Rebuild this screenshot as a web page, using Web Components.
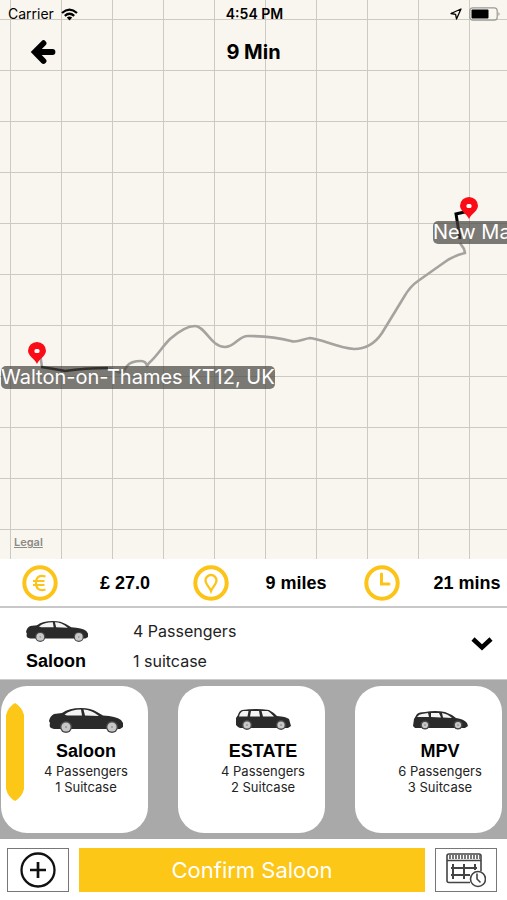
<!DOCTYPE html>
<html lang="en">
<head>
  <meta charset="utf-8">
  <meta name="viewport" content="width=device-width, initial-scale=1">
  <title>Choose your ride</title>
  <style>
    body {
      margin: 0;
      min-height: 100vh;
      display: flex;
      flex-direction: column;
      background: white;
      color: black;
      font-family: Inter, Roboto, sans-serif;
      --brand: #fcc716;
      --heading: "Liberation Sans", Arial, sans-serif;
    }
    ride-map {
      flex: 1;
    }
  </style>
</head>
<body>
  <ride-map>
    <status-bar slot="top"></status-bar>
    <title-bar slot="top">9 Min</title-bar>
    <map-pin x="37" y="342">Walton-on-Thames KT12, UK</map-pin>
    <map-pin x="469" y="197" clipped>New Ma</map-pin>
  </ride-map>
  <trip-stats>
    <trip-stat icon="euro">£ 27.0</trip-stat>
    <trip-stat icon="place">9 miles</trip-stat>
    <trip-stat icon="clock">21 mins</trip-stat>
  </trip-stats>
  <ride-summary>
    <span slot="name">Saloon</span>
    <span slot="seats">4 Passengers</span>
    <span slot="bags">1 suitcase</span>
  </ride-summary>
  <ride-list>
    <ride-card car="saloon" selected>
      <span slot="name">Saloon</span>
      <span slot="seats">4 Passengers</span>
      <span slot="bags">1 Suitcase</span>
    </ride-card>
    <ride-card car="estate">
      <span slot="name">ESTATE</span>
      <span slot="seats">4 Passengers</span>
      <span slot="bags">2 Suitcase</span>
    </ride-card>
    <ride-card car="mpv">
      <span slot="name">MPV</span>
      <span slot="seats">6 Passengers</span>
      <span slot="bags">3 Suitcase</span>
    </ride-card>
  </ride-list>
  <confirm-bar>Confirm Saloon</confirm-bar>

  <script>
    class StatusBar extends HTMLElement {
      constructor() {
        super();
        this.shadowDOM = this.attachShadow({ mode: "open" });
      }

      connectedCallback() {
        this.shadowDOM.innerHTML = `
          <style>
            :host {
              display: grid;
              grid-template-columns: 1fr auto 1fr;
              align-items: center;
              height: 28px;
              padding: 0 6px 0 8px;
              font-size: 14px;
              line-height: 16px;
            }
            .left, .right {
              display: flex;
              align-items: center;
              gap: 7px;
            }
            .right {
              justify-content: flex-end;
            }
            .time {
              font-weight: 600;
            }
            svg {
              display: block;
            }
          </style>
          <div class="left">
            <span>Carrier</span>
            <svg width="17" height="13" viewBox="0 0 17 13" fill="none" stroke="black" stroke-width="2.200">
              <path d="M1 5 Q8.500 -1.800 16 5"/>
              <path d="M3.800 7.900 Q8.500 3.600 13.200 7.900"/>
              <path d="M5.800 9.500 Q8.500 7.300 11.200 9.500 L8.500 12.400Z" fill="black" stroke="none"/>
            </svg>
          </div>
          <span class="time">4:54 PM</span>
          <div class="right">
            <svg width="12" height="12" viewBox="0 0 12 12">
              <path d="M11 1 L1 5.500 L5.600 6.400 L6.500 11Z" fill="none" stroke="black" stroke-width="1.300" stroke-linejoin="round"/>
            </svg>
            <svg width="32" height="14" viewBox="0 0 32 14">
              <rect x=".8" y=".8" width="27.400" height="12.400" rx="3" fill="none" stroke="#999" stroke-width="1.200"/>
              <rect x="2.500" y="2.500" width="17" height="9" rx="1" fill="black"/>
              <path d="M29.500 5 Q31.500 7 29.500 9Z" fill="#888"/>
            </svg>
          </div>
        `;
      }
    }

    customElements.define("status-bar", StatusBar);

    class TitleBar extends HTMLElement {
      constructor() {
        super();
        this.shadowDOM = this.attachShadow({ mode: "open" });
      }

      connectedCallback() {
        this.shadowDOM.innerHTML = `
          <style>
            :host {
              display: grid;
              grid-template-columns: 1fr auto 1fr;
              align-items: center;
              height: 48px;
              padding: 0 30px;
            }
            button {
              justify-self: start;
              padding: 0;
              border: 0;
              background: none;
              cursor: pointer;
            }
            svg {
              display: block;
            }
            h1 {
              margin: 0;
              font-size: 20px;
              line-height: 24px;
              font-weight: 700;
            }
          </style>
          <button type="button" aria-label="Back">
            <svg width="26" height="26" viewBox="0 0 26 26" fill="none" stroke="black" stroke-width="5.800" stroke-linecap="round" stroke-linejoin="miter">
              <path d="M22.500 13 H7 M13.500 4.200 L4.800 13 L13.500 22"/>
            </svg>
          </button>
          <h1><slot></slot></h1>
        `;
      }
    }

    customElements.define("title-bar", TitleBar);

    class RideMap extends HTMLElement {
      constructor() {
        super();
        this.shadowDOM = this.attachShadow({ mode: "open" });
      }

      connectedCallback() {
        this.shadowDOM.innerHTML = `
          <style>
            :host {
              display: flex;
              flex-direction: column;
              position: relative;
              overflow: hidden;
              min-height: 420px;
              background-color: #f9f6ef;
              background-image:
                linear-gradient(to right, #cdcac4 1px, transparent 1px),
                linear-gradient(to bottom, #cdcac4 1px, transparent 1px);
              background-size: 51px 51px;
              background-position: 10px 19px;
            }
            .route {
              position: absolute;
              left: 0;
              top: 0;
            }
            slot[name="top"]::slotted(*) {
              position: relative;
            }
            a {
              position: relative;
              align-self: flex-start;
              margin: auto 14px 10px;
              color: #8c8a86;
              font-size: 11px;
              line-height: 14px;
              font-weight: 600;
            }
          </style>
          <svg class="route" width="507" height="559" viewBox="0 0 507 559" fill="none" stroke-width="2.600" stroke-linejoin="round">
            <path stroke="#a5a39f" d="M40 354 L42 367 M109 368 L118 372 Q123 374 127 366 Q131 361 141 361 Q146 361 147 366 L149 363 C157 356 162 347 170 339 C178 332 187 326 195 326 C205 326 211 347 225 347 C235 347 238 336 248 336 C266 336 280 338 291 341 C297 343 303 339 310 338 C321 339 339 348 354 349 C368 349 376 342 382 333 L404 297 C408 290 412 285 418 281 L442 264 Q452 256 465 253 L464 249 L460 243"/>
            <path stroke="black" d="M41 367 Q55 369 65 371 Q85 368 108 368"/>
            <path stroke="black" stroke-width="3" stroke-linejoin="miter" d="M469 211 L456 214 L460 239"/>
          </svg>
          <slot name="top"></slot>
          <slot></slot>
          <a href="#legal">Legal</a>
        `;
      }
    }

    customElements.define("ride-map", RideMap);

    class MapPin extends HTMLElement {
      constructor() {
        super();
        this.shadowDOM = this.attachShadow({ mode: "open" });
      }

      connectedCallback() {
        const x = Number(this.getAttribute("x"));
        const y = Number(this.getAttribute("y"));

        // a clipped label runs off the right side of the map
        this.shadowDOM.innerHTML = `
          <style>
            :host {
              position: absolute;
              left: ${x - 36}px;
              top: ${y}px;
            }
            :host([clipped]) {
              right: 0;
            }
            svg {
              display: block;
              margin: 0 0 2px 27px;
            }
            .label {
              border-radius: 5px;
              background: rgba(70, 68, 64, 0.7);
              color: white;
              font-size: 20px;
              line-height: 23px;
              white-space: nowrap;
            }
            :host([clipped]) .label {
              border-radius: 5px 0 0 5px;
            }
          </style>
          <svg width="18" height="22" viewBox="0 0 18 22">
            <path d="M9 22 C7 17 0 14 0 8.800 A9 8.800 0 0 1 18 8.800 C18 14 11 17 9 22Z" fill="#fa0d16"/>
            <rect x="6.500" y="7" width="5" height="4" rx="1.500" fill="white"/>
          </svg>
          <div class="label"><slot></slot></div>
        `;
      }
    }

    customElements.define("map-pin", MapPin);

    class TripStats extends HTMLElement {
      constructor() {
        super();
        this.shadowDOM = this.attachShadow({ mode: "open" });
      }

      connectedCallback() {
        this.shadowDOM.innerHTML = `
          <style>
            :host {
              display: flex;
              justify-content: space-between;
              height: 47px;
              border-bottom: 2px solid #c8c8c8;
            }
          </style>
          <slot></slot>
        `;
      }
    }

    customElements.define("trip-stats", TripStats);

    const statIcons = {
      euro: `<path d="M23.500 11.500 Q14 9 14 18 Q14 27 23.500 24.500 M11 16 H22.500 M11 20 H22.500" stroke-width="2.200"/>`,
      place: `<path d="M18 26 C16.500 22 12.500 19 12.500 15.500 A5.500 5.500 0 0 1 23.500 15.500 C23.500 19 19.500 22 18 26Z" stroke-width="2.300"/>`,
      clock: `<path d="M17.500 9 V19 H25" stroke-width="3" stroke-linecap="round"/>`,
    };

    class TripStat extends HTMLElement {
      constructor() {
        super();
        this.shadowDOM = this.attachShadow({ mode: "open" });
      }

      connectedCallback() {
        this.shadowDOM.innerHTML = `
          <style>
            :host {
              display: grid;
              grid-template-columns: 80px 80px;
              gap: 5px;
              align-items: center;
              justify-items: center;
              font: bold 18px/22px var(--heading);
              white-space: nowrap;
            }
            svg {
              display: block;
            }
          </style>
          <svg width="36" height="36" viewBox="0 0 36 36" fill="none" stroke="#fcc419">
            <circle cx="18" cy="18" r="15.700" stroke-width="4"/>
            ${statIcons[this.getAttribute("icon")]}
          </svg>
          <span><slot></slot></span>
        `;
      }
    }

    customElements.define("trip-stat", TripStat);

    const wheels = (back, front, y, r) => [back, front].map((x) => `
      <circle cx="${x}" cy="${y}" r="${r}" fill="#4a4a4a"/>
      <circle cx="${x}" cy="${y}" r="${r - 1.400}" fill="#c8c8c8"/>
      <circle cx="${x}" cy="${y}" r="1" fill="#999"/>`).join("");

    const cars = {
      saloon: {
        width: 74,
        height: 25,
        body: `
          <path fill="#2b2a2b" d="M2 20 Q0 19 1 15 L0 13 Q1 8 5 6 L13 5 Q20 0 32 0 Q42 0 48 4 L54 7.500 Q67 8 72 12 L74 15 V19 L71 21 H5Z"/>
          <path fill="#f4f4f4" d="M15.500 6.500 Q22 1.500 32 1.500 L33 7.500 L18 7.500Z M34.500 1.500 Q42 1.500 50 8 L36 7.500Z"/>
          ${wheels(17, 63, 19, 6)}`,
      },
      estate: {
        width: 55,
        height: 22,
        body: `
          <path fill="#2b2a2b" d="M2 18 L0 16 V9 L2 6 Q3 2 6 1 Q20 -1 33 1 Q37 3 41 7 Q50 7.500 53 10 L55 17 L52 19 H4Z"/>
          <path fill="#f4f4f4" d="M3 7.500 Q4 3 7 2 H12.500 L11.500 7.500Z M15 2 H23 L24 7.500 H14Z M25.500 2 H32 Q35 4 38 7.500 H27Z"/>
          ${wheels(11, 45, 16, 5)}`,
      },
      mpv: {
        width: 55,
        height: 19,
        body: `
          <path fill="#2b2a2b" d="M2 17 L0 15 L1 8 L4 3 Q6 1 12 1 Q22 -1 32 1 Q38 3 43 7 Q51 8 54 12 L55 15 L52 17Z"/>
          <path fill="#f4f4f4" d="M4 6 Q6 3 9 3 L15 2 L16 6Z M18 2 H26 L28 6.500 L18 6Z M29 2 Q35 3 39 7 L30 6.500Z"/>
          ${wheels(12, 45, 14, 4.500)}`,
      },
    };

    class CarIcon extends HTMLElement {
      constructor() {
        super();
        this.shadowDOM = this.attachShadow({ mode: "open" });
      }

      connectedCallback() {
        const car = cars[this.getAttribute("car")];
        const width = this.getAttribute("width") || car.width;

        this.shadowDOM.innerHTML = `
          <style>
            :host {
              display: block;
            }
            svg {
              display: block;
              overflow: visible;
            }
          </style>
          <svg width="${width}" viewBox="0 0 ${car.width} ${car.height}">${car.body}</svg>
        `;
      }
    }

    customElements.define("car-icon", CarIcon);

    class RideSummary extends HTMLElement {
      constructor() {
        super();
        this.shadowDOM = this.attachShadow({ mode: "open" });
      }

      connectedCallback() {
        this.shadowDOM.innerHTML = `
          <style>
            :host {
              display: flex;
              align-items: center;
              justify-content: space-between;
              height: 71px;
              padding: 0 14px 0 26px;
              border-bottom: 1px solid #ccc;
              font-size: 16px;
              line-height: 20px;
              color: #222;
            }
            .ride {
              display: grid;
              grid-template-columns: 62px auto;
              grid-template-rows: 30px 30px;
              column-gap: 45px;
              align-items: center;
              padding-top: 5px;
            }
            .name {
              font: bold 18px/22px var(--heading);
              color: black;
            }
            button {
              padding: 0;
              border: 0;
              background: none;
              cursor: pointer;
            }
            button svg {
              display: block;
            }
          </style>
          <div class="ride">
            <car-icon car="saloon" width="62"></car-icon>
            <div><slot name="seats"></slot></div>
            <div class="name"><slot name="name"></slot></div>
            <div><slot name="bags"></slot></div>
          </div>
          <button type="button" aria-label="Show rides">
            <svg width="22" height="14" viewBox="0 0 22 14" fill="none" stroke="black" stroke-width="4.500">
              <path d="M2 2 L11 10.500 L20 2"/>
            </svg>
          </button>
        `;
      }
    }

    customElements.define("ride-summary", RideSummary);

    class RideList extends HTMLElement {
      constructor() {
        super();
        this.shadowDOM = this.attachShadow({ mode: "open" });
      }

      connectedCallback() {
        this.shadowDOM.innerHTML = `
          <style>
            :host {
              display: flex;
              gap: 30px;
              padding: 6px 5px 6px 1px;
              overflow-x: auto;
              background: #a9a9a9;
            }
          </style>
          <slot></slot>
        `;
      }
    }

    customElements.define("ride-list", RideList);

    class RideCard extends HTMLElement {
      constructor() {
        super();
        this.shadowDOM = this.attachShadow({ mode: "open" });
      }

      connectedCallback() {
        const selected = this.hasAttribute("selected");

        this.shadowDOM.innerHTML = `
          <style>
            :host {
              display: block;
              flex: 1 0 147px;
            }
            button {
              display: grid;
              grid-template-columns: 18px 1fr;
              width: 100%;
              height: 147px;
              padding: 17px 0 0 5px;
              border: 0;
              border-radius: 26px;
              background: white;
              color: #222;
              font: 13px/16px Inter, Roboto, sans-serif;
              align-items: start;
              cursor: pointer;
            }
            .marker {
              display: block;
            }
            .info {
              display: flex;
              flex-direction: column;
              align-items: center;
            }
            .car {
              display: flex;
              align-items: center;
              height: 34px;
            }
            .name {
              margin: 3px 0 1px;
              font: bold 18px/22px var(--heading);
              color: black;
            }
          </style>
          <button type="button" aria-pressed="${selected}">
            <svg class="marker" width="18" height="98" viewBox="0 0 18 98">
              ${selected ? `<path fill="#fcc716" d="M9 0 Q16 4 18 12 V86 Q16 94 9 98 Q2 94 0 86 V12 Q2 4 9 0Z"/>` : ""}
            </svg>
            <span class="info">
              <span class="car"><car-icon car="${this.getAttribute("car")}"></car-icon></span>
              <span class="name"><slot name="name"></slot></span>
              <slot name="seats"></slot>
              <slot name="bags"></slot>
            </span>
          </button>
        `;
      }
    }

    customElements.define("ride-card", RideCard);

    class ConfirmBar extends HTMLElement {
      constructor() {
        super();
        this.shadowDOM = this.attachShadow({ mode: "open" });
      }

      connectedCallback() {
        this.shadowDOM.innerHTML = `
          <style>
            :host {
              display: flex;
              gap: 10px;
              padding: 9px 10px 8px 7px;
            }
            button {
              box-sizing: border-box;
              height: 44px;
              padding: 0;
              border: 0;
              cursor: pointer;
            }
            .square {
              display: grid;
              place-items: center;
              width: 62px;
              border: 1px solid #777;
              background: white;
            }
            .confirm {
              flex: 1;
              background: var(--brand);
              color: white;
              font: 22px/28px Inter, Roboto, sans-serif;
            }
          </style>
          <button class="square" type="button" aria-label="Add">
            <svg width="36" height="36" viewBox="0 0 36 36" fill="none" stroke="#111">
              <circle cx="18" cy="18" r="16.500" stroke-width="2.300"/>
              <path d="M10 18 H26 M18 10 V26" stroke-width="2.700"/>
            </svg>
          </button>
          <button class="confirm" type="button"><slot></slot></button>
          <button class="square" type="button" aria-label="Book for later">
            <svg width="40" height="36" viewBox="0 0 40 36" fill="none" stroke="#444" stroke-width="1.600">
              <path d="M24 30.500 H3 Q1 30.500 1 28.500 V4 Q1 2 3 2 H33 Q35 2 35 4 V19"/>
              <path d="M1 8.500 H35"/>
              <path d="M3 5 H34" stroke="#777" stroke-width="4" stroke-dasharray="2 1"/>
              <path d="M7 12 V27 M18 12 V27 M29 12 V18 M5 16 H31 M5 23 H24" stroke-width="2"/>
              <circle cx="32" cy="27" r="7.500" fill="white"/>
              <path d="M31 21.500 V27 L34.500 30.500"/>
            </svg>
          </button>
        `;
      }
    }

    customElements.define("confirm-bar", ConfirmBar);
  </script>
</body>
</html>
